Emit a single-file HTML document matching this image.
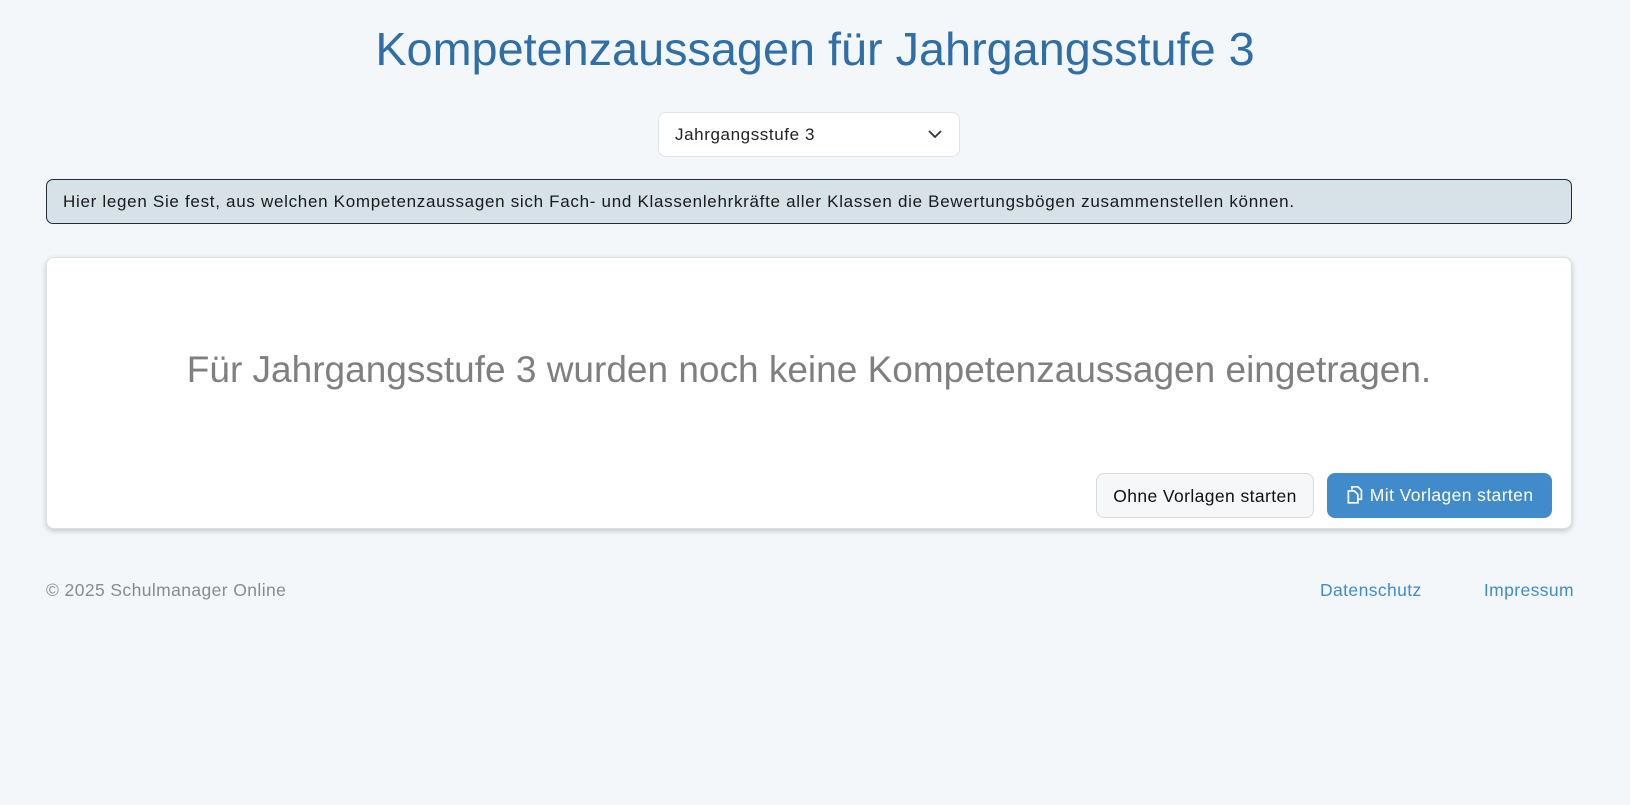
<!DOCTYPE html>
<html><head><meta charset="utf-8"><style>
*{box-sizing:border-box;margin:0;padding:0}
body{width:1630px;height:805px;background:#f4f7fa;font-family:"Liberation Sans",sans-serif;position:relative;overflow:hidden}
h1{position:absolute;top:22px;left:0;width:1630px;text-align:center;font-weight:400;font-size:46.8px;color:#2f6ea6}
.sel{position:absolute;left:658px;top:112px;width:302px;height:45px;background:#fff;border:1px solid #dfe3e8;border-radius:8px;font-size:17px;letter-spacing:0.6px;color:#222;padding:12px 16px}
.sel svg{position:absolute;right:17px;top:17px}
.info{position:absolute;left:46px;top:179px;width:1526px;height:45px;background:#d6e1e8;border:1px solid #1f2d3d;border-radius:7px;font-size:17px;letter-spacing:0.7px;color:#1a1a1a;padding:12px 16px;white-space:nowrap}
.card{position:absolute;left:46px;top:257px;width:1526px;height:272px;background:#fff;border:1px solid #dde1e5;border-radius:8px;box-shadow:0 2px 6px rgba(0,0,0,.2)}
.msg{position:absolute;top:91px;left:0;width:100%;text-align:center;font-size:37px;color:#7f7f7f}
.btn{position:absolute;top:215px;height:45px;border-radius:8px;font-size:17.5px;letter-spacing:0.4px;padding:12px 0;text-align:center;white-space:nowrap}
.b1{left:1049px;width:218px;background:#f5f7f9;border:1px solid #d6dadf;color:#111}
.b2{left:1280px;width:225px;background:#428bca;color:#fff}
.foot{position:absolute;top:580px;font-size:17.5px;letter-spacing:0.4px}
</style></head><body>
<h1>Kompetenzaussagen für Jahrgangsstufe 3</h1>
<div class="sel">Jahrgangsstufe 3<svg width="14" height="9" viewBox="0 0 14 9"><path d="M1 1l6 6 6-6" fill="none" stroke="#333" stroke-width="1.8"/></svg></div>
<div class="info">Hier legen Sie fest, aus welchen Kompetenzaussagen sich Fach- und Klassenlehrkräfte aller Klassen die Bewertungsbögen zusammenstellen können.</div>
<div class="card">
<div class="msg">Für Jahrgangsstufe 3 wurden noch keine Kompetenzaussagen eingetragen.</div>
<div class="btn b1">Ohne Vorlagen starten</div>
<div class="btn b2"><svg width="19" height="19" viewBox="0 0 16 16" style="vertical-align:-3px"><path d="M5 4V1.5h5l3 3V12h-3M2 5h5l3 3v7H2z" fill="none" stroke="#fff" stroke-width="1.4"/></svg> Mit Vorlagen starten</div>
</div>
<div class="foot" style="left:46px;color:#8a8a8a">© 2025 Schulmanager Online</div>
<div class="foot" style="left:1320px;color:#428bca">Datenschutz</div>
<div class="foot" style="right:56px;color:#428bca">Impressum</div>
</body></html>
